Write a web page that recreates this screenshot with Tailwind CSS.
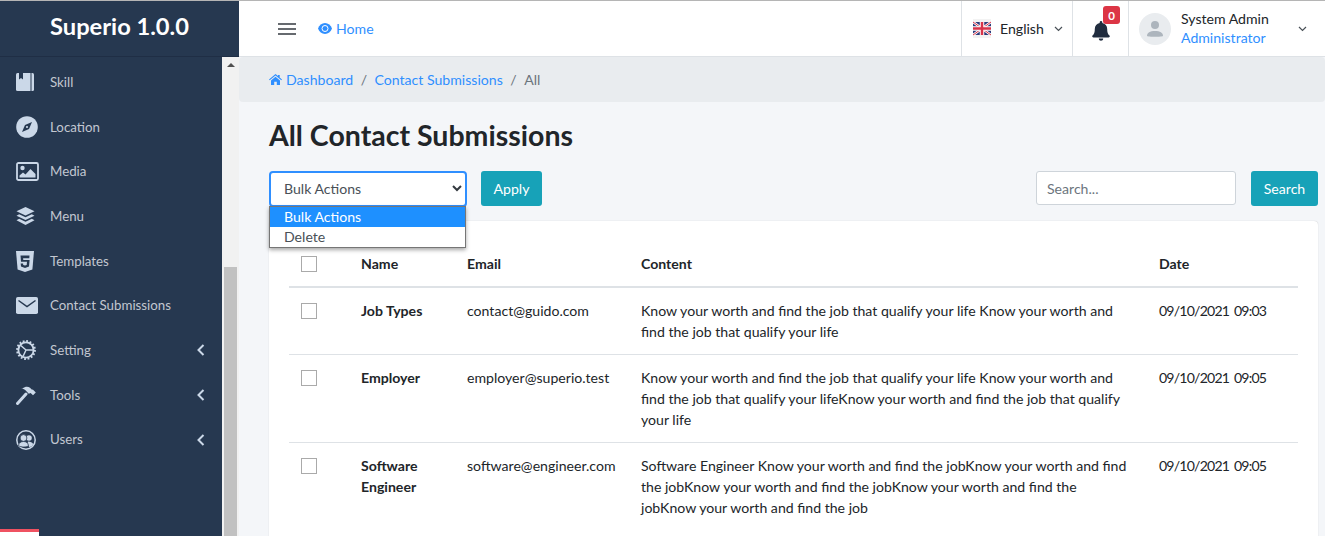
<!DOCTYPE html>
<html><head><meta charset="utf-8"><script src="https://cdn.jsdelivr.net/npm/@tailwindcss/browser@4"></script></head>
<body class="h-[536px] w-[1325px] overflow-hidden bg-[#f4f6f9] font-['Lato',sans-serif] text-[14.1px] leading-[21px] text-[#212529]">
<div class="flex h-[536px] border-t border-[#b5b5b5]">
  <aside class="flex h-[535px] w-[239px] shrink-0 flex-col bg-[#263850]">
    <div class="flex h-[56px] shrink-0 items-center justify-center border-b border-[#1f2e45] pb-[4px] text-[23.7px] font-bold text-white">Superio 1.0.0</div>
    <div class="flex min-h-0 flex-1">
      <nav class="relative w-[222px] shrink-0 pt-[3px] text-[13.3px] text-[#c2c7d0]">
        <a class="flex h-[44.7px] items-center pl-[16px]"><svg class="w-[18px] h-[18px] mr-[16px]" viewBox="0 0 18 18"><rect x="0" y="0" width="18" height="18" rx="1.5" fill="#cbd8e8"/><rect x="14.5" width="1" height="18" fill="#263850"/><path d="M3 0h4v6.5L5 5 3 6.5z" fill="#263850"/></svg>Skill</a>
        <a class="flex h-[44.7px] items-center pl-[16px]"><svg class="w-[22px] h-[22px] mr-[12px]" viewBox="0 0 22 22"><circle cx="11" cy="11" r="10.8" fill="#cbd8e8"/><path d="M16 6l-3 7-7 3 3-7z" fill="#263850"/><circle cx="11" cy="11" r="1.1" fill="#cbd8e8"/></svg>Location</a>
        <a class="flex h-[44.7px] items-center pl-[16px]"><svg class="w-[23px] h-[19px] mr-[11px]" viewBox="0 0 23 19"><rect x="1" y="1" width="21" height="17" rx="1.5" fill="none" stroke="#cbd8e8" stroke-width="1.8"/><circle cx="6.5" cy="6" r="2.2" fill="#cbd8e8"/><path d="M3.5 15.5v-2l3.5-3 2.5 2 5-5.5 5 5v3.500z" fill="#cbd8e8"/></svg>Media</a>
        <a class="flex h-[44.7px] items-center pl-[16px]"><svg class="w-[19px] h-[19px] mr-[15px]" viewBox="0 0 19 19"><path d="M9.500 0l9 4.200-9 4.200-9-4.200z" fill="#cbd8e8"/><path d="M3.200 7.300L.5 8.700l9 4.300 9-4.300-2.700-1.400-6.300 3z" fill="#cbd8e8"/><path d="M3.200 11.800L.5 13.200l9 4.800 9-4.800-2.700-1.400-6.300 3z" fill="#cbd8e8"/></svg>Menu</a>
        <a class="flex h-[44.7px] items-center pl-[16px]"><svg class="w-[18px] h-[21px] mr-[16px]" viewBox="0 0 18 21"><path d="M0 0h18l-1.600 18.500L9 21l-7.400-2.500z" fill="#cbd8e8"/><path d="M13.500 4.500h-9l.5 6.200h6l-.3 3.300-1.700.6-1.800-.6-.1-1.400H4.700l.3 3 4 1.300 4-1.300.6-6.500H7.300l-.2-1.900h6.200z" fill="#263850"/></svg>Templates</a>
        <a class="flex h-[44.7px] items-center pl-[16px]"><svg class="w-[22px] h-[17px] mr-[12px]" viewBox="0 0 22 17"><rect width="22" height="17" rx="1.800" fill="#cbd8e8"/><path d="M2.500 3.500L11 9.500l8.500-6" fill="none" stroke="#263850" stroke-width="1.500"/></svg>Contact Submissions</a>
        <a class="flex h-[44.7px] items-center pl-[16px]"><svg class="w-[20px] h-[20px] mr-[14px]" viewBox="0 0 20 20"><circle cx="10" cy="10" r="7.600" fill="none" stroke="#cbd8e8" stroke-width="1.800"/><circle cx="10" cy="10" r="8.800" fill="none" stroke="#cbd8e8" stroke-width="2.200" stroke-dasharray="1.800 1.650"/><path d="M10 10L4.800 5.500M10 10h7M10 10l-3 6.500" stroke="#cbd8e8" stroke-width="1.500"/></svg>Setting<svg class="absolute left-[197px] h-[12px] w-[8px]" viewBox="0 0 8 12"><path d="M6.500 1L1.500 6l5 5" fill="none" stroke="#cbd8e8" stroke-width="2"/></svg></a>
        <a class="flex h-[44.7px] items-center pl-[16px]"><svg class="w-[20px] h-[19px] mr-[14px]" viewBox="0 0 20 19"><path d="M1.500 17.500L10 8" stroke="#cbd8e8" stroke-width="3" stroke-linecap="round"/><path d="M6.500 2.500C9 .5 12 .3 14 1.800l2 2 .8-.3 3 3-2.800 2.800-2.400-2.300-1.800.7-3.600-3.600c-1-.8-2.200-1.300-4.200-1.600z" fill="#cbd8e8"/></svg>Tools<svg class="absolute left-[197px] h-[12px] w-[8px]" viewBox="0 0 8 12"><path d="M6.500 1L1.500 6l5 5" fill="none" stroke="#cbd8e8" stroke-width="2"/></svg></a>
        <a class="flex h-[44.7px] items-center pl-[16px]"><svg class="w-[20px] h-[20px] mr-[14px]" viewBox="0 0 20 20"><circle cx="10" cy="10" r="9.200" fill="none" stroke="#cbd8e8" stroke-width="1.500"/><circle cx="13" cy="8" r="2.800" fill="#cbd8e8"/><path d="M12 11.500c2.500 0 4.500 1 5.200 2.500l-1.200 2-2.500 1.300-2-3z" fill="#cbd8e8"/><circle cx="7.500" cy="8" r="3.400" fill="#cbd8e8" stroke="#263850" stroke-width=".8"/><path d="M2.500 15.500c.3-3 2.500-4 5-4s4.500 1 5 4c-1.500 2-8 2-10 0z" fill="#cbd8e8" stroke="#263850" stroke-width=".8"/></svg>Users<svg class="absolute left-[197px] h-[12px] w-[8px]" viewBox="0 0 8 12"><path d="M6.500 1L1.500 6l5 5" fill="none" stroke="#cbd8e8" stroke-width="2"/></svg></a>
        <div class="absolute bottom-0 left-0 h-[7px] w-[39px] border-t-[3px] border-[#ef5261] bg-white"></div>
      </nav>
      <div class="relative w-[17px] shrink-0 bg-[#f1f1f1] pl-[2px]">
        <div class="absolute left-[5px] top-[6px] h-0 w-0 border-x-[4px] border-b-[4px] border-x-transparent border-b-[#505050]"></div>
        <div class="absolute bottom-0 left-[2px] h-[269px] w-[13px] bg-[#c1c1c1]"></div>
      </div>
    </div>
  </aside>
  <main class="min-w-0 flex-1">
    <header class="flex h-[56px] items-stretch border-b border-[#dee2e6] bg-white">
      <div class="flex flex-1 items-center pl-[39px]">
        <svg class="h-[12px] w-[18px]" viewBox="0 0 18 12"><path d="M0 1h18M0 6h18M0 11h18" stroke="#343a40" stroke-width="1.500"/></svg>
        <svg class="ml-[22px] h-[11px] w-[14px]" viewBox="0 0 14 11"><path d="M7 0C3.800 0 1.200 2.200 0 5.500 1.200 8.800 3.800 11 7 11s5.800-2.200 7-5.500C12.800 2.200 10.200 0 7 0z" fill="#2f8fff"/><circle cx="7" cy="5.500" r="3" fill="none" stroke="#fff" stroke-width="1"/></svg>
        <span class="ml-[4px] text-[#2f8fff]">Home</span>
      </div>
      <div class="flex w-[111px] items-center border-l border-[#dee2e6] pl-[11px]">
        <svg class="h-[19px] w-[18px]" viewBox="0 0 18 19"><rect width="18" height="19" fill="#f3f3f3"/><rect y="3" width="18" height="13" fill="#2b3a7a"/><path d="M0 3l18 13M18 3L0 16" stroke="#fff" stroke-width="2.500"/><path d="M0 3l18 13M18 3L0 16" stroke="#d8344a" stroke-width="1"/><path d="M9 3v13M0 9.500h18" stroke="#fff" stroke-width="4.500"/><path d="M9 3v13M0 9.500h18" stroke="#d8344a" stroke-width="2.500"/></svg>
        <span class="ml-[9px] w-[49px]">English</span>
        <svg class="ml-[5px] h-[6px] w-[9px]" viewBox="0 0 9 6"><path d="M1 1l3.500 3.500L8 1" fill="none" stroke="#495057" stroke-width="1.200"/></svg>
      </div>
      <div class="relative flex w-[56px] items-center border-l border-[#dee2e6] pl-[19px]">
        <svg class="mt-[5px] h-[20px] w-[18px]" viewBox="0 0 18 20"><path d="M9 0c-.8 0-1.300.6-1.300 1.300v.8C4.800 2.700 2.800 5 2.800 8c0 4.200-1.300 5.500-2.300 6.600-.6.700-.2 1.900.9 1.900h15.200c1.100 0 1.500-1.200.9-1.900-1-1.100-2.300-2.400-2.300-6.600 0-3-2-5.300-4.900-5.900v-.8C10.300.6 9.800 0 9 0zM6.800 17.500c0 1.300 1 2.300 2.200 2.300s2.200-1 2.200-2.300z" fill="#212d3f"/></svg>
        <span class="absolute left-[30px] top-[5px] flex h-[18px] w-[17px] items-center justify-center rounded-[3px] bg-[#dc3545] text-[11.500px] font-bold text-white">0</span>
      </div>
      <div class="flex w-[197px] items-center border-l border-[#dee2e6] pl-[10px]">
        <svg class="h-[32px] w-[32px] shrink-0" viewBox="0 0 32 32"><circle cx="16" cy="16" r="16" fill="#e9ecef"/><circle cx="16" cy="12" r="4" fill="#adb5bd"/><path d="M8 23c0-3.500 3-5 8-5s8 1.500 8 5c-1 1-15 1-16 0z" fill="#adb5bd"/></svg>
        <div class="ml-[10px] w-[112px] leading-[19px]"><div class="mt-[-1px]">System Admin</div><div class="text-[#2f8fff]">Administrator</div></div>
        <svg class="ml-[5px] h-[6px] w-[9px]" viewBox="0 0 9 6"><path d="M1 1l3.500 3.500L8 1" fill="none" stroke="#495057" stroke-width="1.200"/></svg>
      </div>
    </header>
    <div class="flex h-[45px] items-center rounded-[4px] bg-[#e9ecef] pl-[30px] pb-[1px]">
      <svg class="mr-[4px] h-[11px] w-[13px]" viewBox="0 0 13 11"><path d="M6.500 0L0 5.500l.7.800L6.500 1.500l5.800 4.800.7-.8-2.300-1.900V1H9v1.100zM2 6.500V11h3.200V7.800h2.600V11H11V6.500L6.500 2.800z" fill="#2f8fff"/></svg>
      <span class="text-[#2f8fff]">Dashboard</span><span class="px-[7.500px] text-[#6c757d]">/</span><span class="text-[#2f8fff]">Contact Submissions</span><span class="px-[7.500px] text-[#6c757d]">/</span><span class="text-[#6c757d]">All</span>
    </div>
    <div class="px-[30px] pr-[7px]">
      <h1 class="mt-[15px] text-[28.5px] font-bold leading-[36px]">All Contact Submissions</h1>
      <div class="relative mt-[18px] flex h-[36px] items-start">
        <div class="flex h-[36px] w-[198px] items-center justify-between rounded-[4px] border-2 border-[#2f8fff] bg-white pb-[2px] pl-[13px] pr-[3px] text-[#495057]">Bulk Actions<svg class="h-[7px] w-[10px]" viewBox="0 0 10 7"><path d="M1 1l4 4 4-4" fill="none" stroke="#343a40" stroke-width="2"/></svg></div>
        <button class="ml-[14px] h-[35px] w-[61px] rounded-[3px] bg-[#17a2b8] text-white">Apply</button>
        <div class="ml-auto flex h-[34px] w-[200px] items-center rounded-[3px] border border-[#ced4da] bg-white pl-[10px] text-[#6c757d]">Search...</div>
        <button class="ml-[15px] h-[35px] w-[67px] rounded-[3px] bg-[#17a2b8] text-white">Search</button>
        <div class="absolute left-0 top-[35px] z-10 w-[197px] border border-[#767676] bg-white text-[#495057] shadow-[0_2px_4px_rgba(0,0,0,0.35)]">
          <div class="h-[20px] bg-[#1e90ff] pl-[14px] leading-[20px] text-white">Bulk Actions</div>
          <div class="h-[20px] pl-[14px] leading-[20px]">Delete</div>
        </div>
      </div>
      <div class="mt-[14px] h-[400px] rounded-t-[4px] bg-white px-[20px] pt-[21px] shadow-[0_0_1px_rgba(0,0,0,0.25)]">
        <table class="w-[1009px] table-fixed border-collapse text-left">
          <colgroup><col class="w-[60px]"><col class="w-[106px]"><col class="w-[174px]"><col class="w-[518px]"><col class="w-[151px]"></colgroup>
          <thead><tr class="h-[45px] border-b-2 border-[#dee2e6]"><th class="px-[12px]"><div class="h-[16px] w-[16px] border border-[#aaa] bg-white"></div></th><th class="px-[12px] pb-[2px] font-bold">Name</th><th class="px-[12px] pb-[2px] font-bold">Email</th><th class="px-[12px] pb-[2px] font-bold">Content</th><th class="px-[12px] pb-[2px] font-bold">Date</th></tr></thead>
          <tbody class="align-top">
            <tr class="border-b border-[#dee2e6]"><td class="p-[12px]"><div class="mt-[3px] h-[16px] w-[16px] border border-[#aaa] bg-white"></div></td><td class="p-[12px] font-bold">Job Types</td><td class="p-[12px]">contact@guido.com</td><td class="p-[12px]">Know your worth and find the job that qualify your life Know your worth and find the job that qualify your life</td><td class="p-[12px] tracking-[-0.8px] [word-spacing:2px]">09/10/2021 09:03</td></tr>
            <tr class="border-b border-[#dee2e6]"><td class="p-[12px]"><div class="mt-[3px] h-[16px] w-[16px] border border-[#aaa] bg-white"></div></td><td class="p-[12px] font-bold">Employer</td><td class="p-[12px]">employer@superio.test</td><td class="p-[12px]">Know your worth and find the job that qualify your life Know your worth and find the job that qualify your lifeKnow your worth and find the job that qualify your life</td><td class="p-[12px] tracking-[-0.8px] [word-spacing:2px]">09/10/2021 09:05</td></tr>
            <tr><td class="p-[12px]"><div class="mt-[3px] h-[16px] w-[16px] border border-[#aaa] bg-white"></div></td><td class="p-[12px] font-bold">Software Engineer</td><td class="p-[12px]">software@engineer.com</td><td class="p-[12px]">Software Engineer Know your worth and find the jobKnow your worth and find the jobKnow your worth and find the jobKnow your worth and find the jobKnow your worth and find the job</td><td class="p-[12px] tracking-[-0.8px] [word-spacing:2px]">09/10/2021 09:05</td></tr>
          </tbody>
        </table>
      </div>
    </div>
  </main>
</div>
</body></html>
